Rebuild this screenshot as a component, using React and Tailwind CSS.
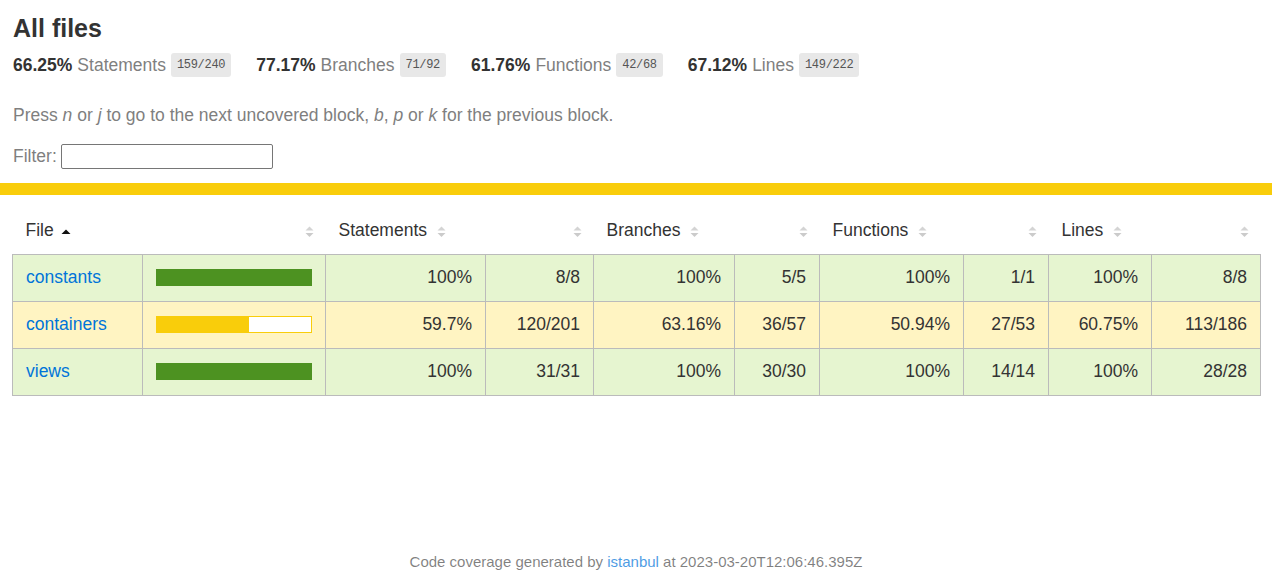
const summary = [
  { pct: '66.25%', label: 'Statements', frac: '159/240' },
  { pct: '77.17%', label: 'Branches', frac: '71/92' },
  { pct: '61.76%', label: 'Functions', frac: '42/68' },
  { pct: '67.12%', label: 'Lines', frac: '149/222' },
]

const rows = [
  {
    file: 'constants', level: 'high', value: 100,
    cells: ['100%', '8/8', '100%', '5/5', '100%', '1/1', '100%', '8/8'],
  },
  {
    file: 'containers', level: 'medium', value: 59.7,
    cells: ['59.7%', '120/201', '63.16%', '36/57', '50.94%', '27/53', '60.75%', '113/186'],
  },
  {
    file: 'views', level: 'high', value: 100,
    cells: ['100%', '31/31', '100%', '30/30', '100%', '14/14', '100%', '28/28'],
  },
]

const colWidths = ['w-[130px]', 'w-[183px]', 'w-[160px]', 'w-[108px]', 'w-[141px]', 'w-[85px]', 'w-[144px]', 'w-[85px]', 'w-[103px]', 'w-[109px]']

const Sorter = () => (
  <svg width="9" height="12" viewBox="0 0 9 12" className="ml-[10px] inline-block align-middle">
    <path d="M0.5 4.5 L4.5 0.5 L8.5 4.5 Z" fill="#d4d4d4" />
    <path d="M0.5 7 L4.5 11 L8.5 7 Z" fill="#cbcbcb" />
  </svg>
)

const SortedUp = () => (
  <svg width="10" height="12" viewBox="0 0 10 12" className="ml-[7px] inline-block align-middle">
    <path d="M0.5 8 L5 3.5 L9.5 8 Z" fill="#111" />
  </svg>
)

const Chart = ({ value, level }) => {
  const high = level === 'high'
  return (
    <div className={`flex h-[17px] leading-[0] ${high ? 'border border-[#4d9221]' : 'border border-[#f9cd0b]'}`}>
      <div className={high ? 'h-full bg-[#4d9221]' : 'h-full bg-[#f9cd0b]'} style={{ width: `${value}%` }} />
      <div className="h-full flex-1 bg-white" />
    </div>
  )
}

export default function App() {
  return (
    <div className="flex min-h-screen flex-col bg-white text-[17.5px] text-[#333]"
      style={{ fontFamily: '"Liberation Sans", Arial, sans-serif' }}>
      <div className="px-[13px] pt-[14px] pb-[14px]">
        <h1 className="text-[25px] font-bold leading-[28px]">All files</h1>
        <div className="flex items-center pt-[11px] pb-[12px]">
          {summary.map((s) => (
            <div key={s.label} className="mr-[25px] flex items-center gap-[5px] leading-[20px]">
              <span className="font-bold">{s.pct}</span>
              <span className="text-[#7f7f7f]">{s.label}</span>
              <span className="rounded-[3px] bg-[#e8e8e8] px-[6px] py-[5px] text-[12px] leading-[14px] tracking-[-0.3px] text-[#555]"
                style={{ fontFamily: '"Liberation Mono", monospace' }}>
                {s.frac}
              </span>
            </div>
          ))}
        </div>
        <p className="mt-[16px] leading-[20px] text-[#7f7f7f]">
          Press <em>n</em> or <em>j</em> to go to the next uncovered block, <em>b</em>, <em>p</em> or <em>k</em> for the previous block.
        </p>
        <div className="mt-[19px] flex h-[25px] items-center gap-[4px] text-[#7f7f7f]">
          <span>Filter:</span>
          <input type="search" className="h-[25px] w-[212px] rounded-[2px] border border-[#767676] bg-white px-[2px] outline-none" />
        </div>
      </div>

      <div className="h-[12px] bg-[#f9cd0b]" />

      <div className="p-[12px]">
        <table className="w-full table-fixed border-collapse">
          <colgroup>
            {colWidths.map((w, i) => <col key={i} className={w} />)}
          </colgroup>
          <thead>
            <tr className="h-[47px]">
              <th className="whitespace-nowrap px-[13px] text-left font-normal">
                File<SortedUp />
              </th>
              <th className="px-[12px] text-right font-normal"><Sorter /></th>
              {['Statements', 'Branches', 'Functions', 'Lines'].map((h) => [
                <th key={h} className="whitespace-nowrap px-[13px] text-left font-normal">
                  {h}<Sorter />
                </th>,
                <th key={h + '-abs'} className="px-[12px] text-right font-normal"><Sorter /></th>,
              ])}
            </tr>
          </thead>
          <tbody className="border border-[#bbb]">
            {rows.map((r) => {
              const bg = r.level === 'high' ? 'bg-[#e6f5d0]' : 'bg-[#fff4c2]'
              return (
                <tr key={r.file} className={`h-[47px] border-b border-[#bbb] ${bg}`}>
                  <td className="whitespace-nowrap border-r border-[#bbb] px-[13px]">
                    <a href="#" className="text-[#0074d9]">{r.file}</a>
                  </td>
                  <td className="border-r border-[#bbb] px-[13px]">
                    <Chart value={r.value} level={r.level} />
                  </td>
                  {r.cells.map((c, i) => (
                    <td key={i} className={`px-[13px] text-right ${i < r.cells.length - 1 ? 'border-r border-[#bbb]' : ''}`}>
                      {c}
                    </td>
                  ))}
                </tr>
              )
            })}
          </tbody>
        </table>
      </div>

      <div className="mt-auto h-[58px] pt-[24px] text-center text-[15px] leading-[18px] text-[rgba(0,0,0,0.5)]">
        Code coverage generated by{' '}
        <a href="#" className="text-[#0074d9] opacity-70">istanbul</a>
        {' '}at 2023-03-20T12:06:46.395Z
      </div>
    </div>
  )
}
